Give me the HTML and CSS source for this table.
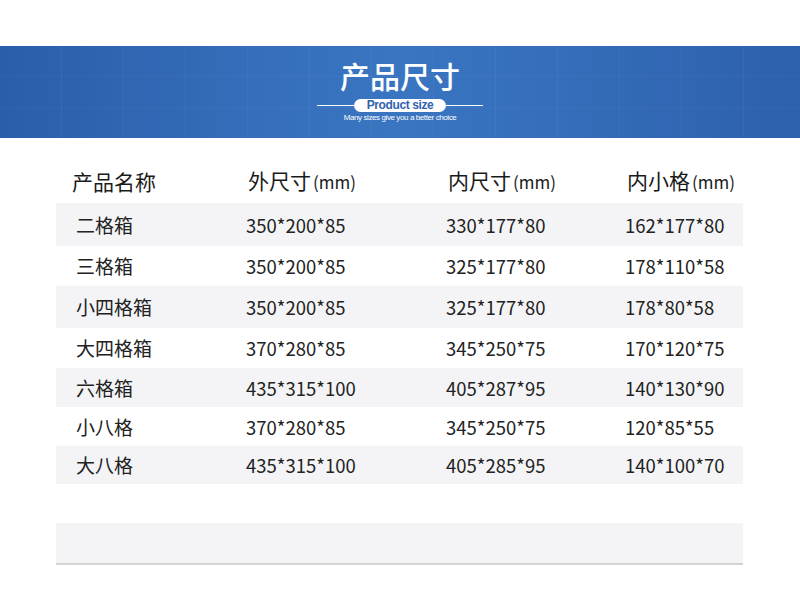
FILE: index.html
```html
<!DOCTYPE html>
<html lang="zh-CN">
<head>
<meta charset="utf-8">
<title>产品尺寸</title>
<link rel="stylesheet" href="styles.css">
</head>
<body>
<header class="banner">
  <h1 class="banner-title">产品尺寸</h1>
  <div class="banner-sub">
    <span class="rule"></span>
    <span class="pill">Product size</span>
    <span class="rule"></span>
  </div>
  <p class="banner-note">Many sizes give you a better choice</p>
</header>

<section class="sizes">
  <div class="table">
    <div class="row head">
      <div class="cell name">产品名称</div>
      <div class="cell">外尺寸<span class="unit">(mm)</span></div>
      <div class="cell">内尺寸<span class="unit">(mm)</span></div>
      <div class="cell">内小格<span class="unit">(mm)</span></div>
    </div>
    <div class="row alt">
      <div class="cell name">二格箱</div>
      <div class="cell">350*200*85</div>
      <div class="cell">330*177*80</div>
      <div class="cell">162*177*80</div>
    </div>
    <div class="row">
      <div class="cell name">三格箱</div>
      <div class="cell">350*200*85</div>
      <div class="cell">325*177*80</div>
      <div class="cell">178*110*58</div>
    </div>
    <div class="row alt">
      <div class="cell name">小四格箱</div>
      <div class="cell">350*200*85</div>
      <div class="cell">325*177*80</div>
      <div class="cell">178*80*58</div>
    </div>
    <div class="row">
      <div class="cell name">大四格箱</div>
      <div class="cell">370*280*85</div>
      <div class="cell">345*250*75</div>
      <div class="cell">170*120*75</div>
    </div>
    <div class="row alt">
      <div class="cell name">六格箱</div>
      <div class="cell">435*315*100</div>
      <div class="cell">405*287*95</div>
      <div class="cell">140*130*90</div>
    </div>
    <div class="row">
      <div class="cell name">小八格</div>
      <div class="cell">370*280*85</div>
      <div class="cell">345*250*75</div>
      <div class="cell">120*85*55</div>
    </div>
    <div class="row alt">
      <div class="cell name">大八格</div>
      <div class="cell">435*315*100</div>
      <div class="cell">405*285*95</div>
      <div class="cell">140*100*70</div>
    </div>
  </div>
  <div class="footer-bar"></div>
</section>
</body>
</html>
```

FILE: styles.css
```css
html, body {
  margin: 0;
  padding: 0;
  background: #ffffff;
}

body {
  font-family: "Noto Sans CJK SC", "Noto Sans", sans-serif;
  color: #222222;
}

.banner {
  margin-top: 46px;
  height: 92px;
  box-sizing: border-box;
  padding-top: 14px;
  display: flex;
  flex-direction: column;
  align-items: center;
  background-color: #3169b5;
  background-image:
    repeating-linear-gradient(90deg, rgba(255,255,255,0) 0, rgba(255,255,255,0) 61px, rgba(255,255,255,0.045) 61px, rgba(255,255,255,0.045) 62px),
    repeating-linear-gradient(0deg, rgba(255,255,255,0) 0, rgba(255,255,255,0) 30px, rgba(255,255,255,0.03) 30px, rgba(255,255,255,0.03) 31px),
    linear-gradient(90deg, #2b5daa 0%, #3670bc 35%, #3a75c1 50%, #3670bc 65%, #2d60ad 100%);
}

.banner-title {
  margin: 0;
  font-size: 30px;
  line-height: 30px;
  font-weight: 500;
  color: #ffffff;
}

.banner-sub {
  display: flex;
  align-items: center;
  margin-top: 9px;
}

.rule {
  display: block;
  width: 37px;
  height: 1px;
  background: #ffffff;
}

.pill {
  display: block;
  width: 92px;
  height: 13px;
  line-height: 13px;
  border-radius: 7px;
  background: #ffffff;
  color: #2f63ae;
  font-family: "Liberation Sans", Arial, sans-serif;
  font-weight: bold;
  font-size: 12px;
  letter-spacing: -0.4px;
  text-align: center;
}

.banner-note {
  margin: 1px 0 0;
  font-family: "Liberation Sans", Arial, sans-serif;
  font-size: 8px;
  line-height: 10px;
  color: #ffffff;
  letter-spacing: -0.4px;
}

.sizes {
  width: 687px;
  margin: 22px 0 0 56px;
}

.table {
  display: grid;
  grid-template-rows: 43px 43px 40px 42px 40px 39px 39px 38px;
}

.row {
  display: grid;
  grid-template-columns: 190px 200px 179px 1fr;
  align-items: center;
  font-size: 18.5px;
}

.row.alt {
  background: #f4f4f6;
}

.cell {
  white-space: nowrap;
  line-height: 24px;
}

.cell.name {
  padding-left: 20px;
  font-size: 19px;
}

.row.head {
  font-size: 21px;
  color: #1a1a1a;
  padding-bottom: 2px;
}

.row.head .cell {
  padding-left: 2px;
}

.row.head .cell.name {
  padding-left: 16px;
  font-size: 21px;
}

.unit {
  font-size: 17px;
  margin-left: 2px;
}

.footer-bar {
  margin-top: 39px;
  height: 40px;
  background: #f4f4f6;
  border-bottom: 2px solid #d3d3d6;
}
```
